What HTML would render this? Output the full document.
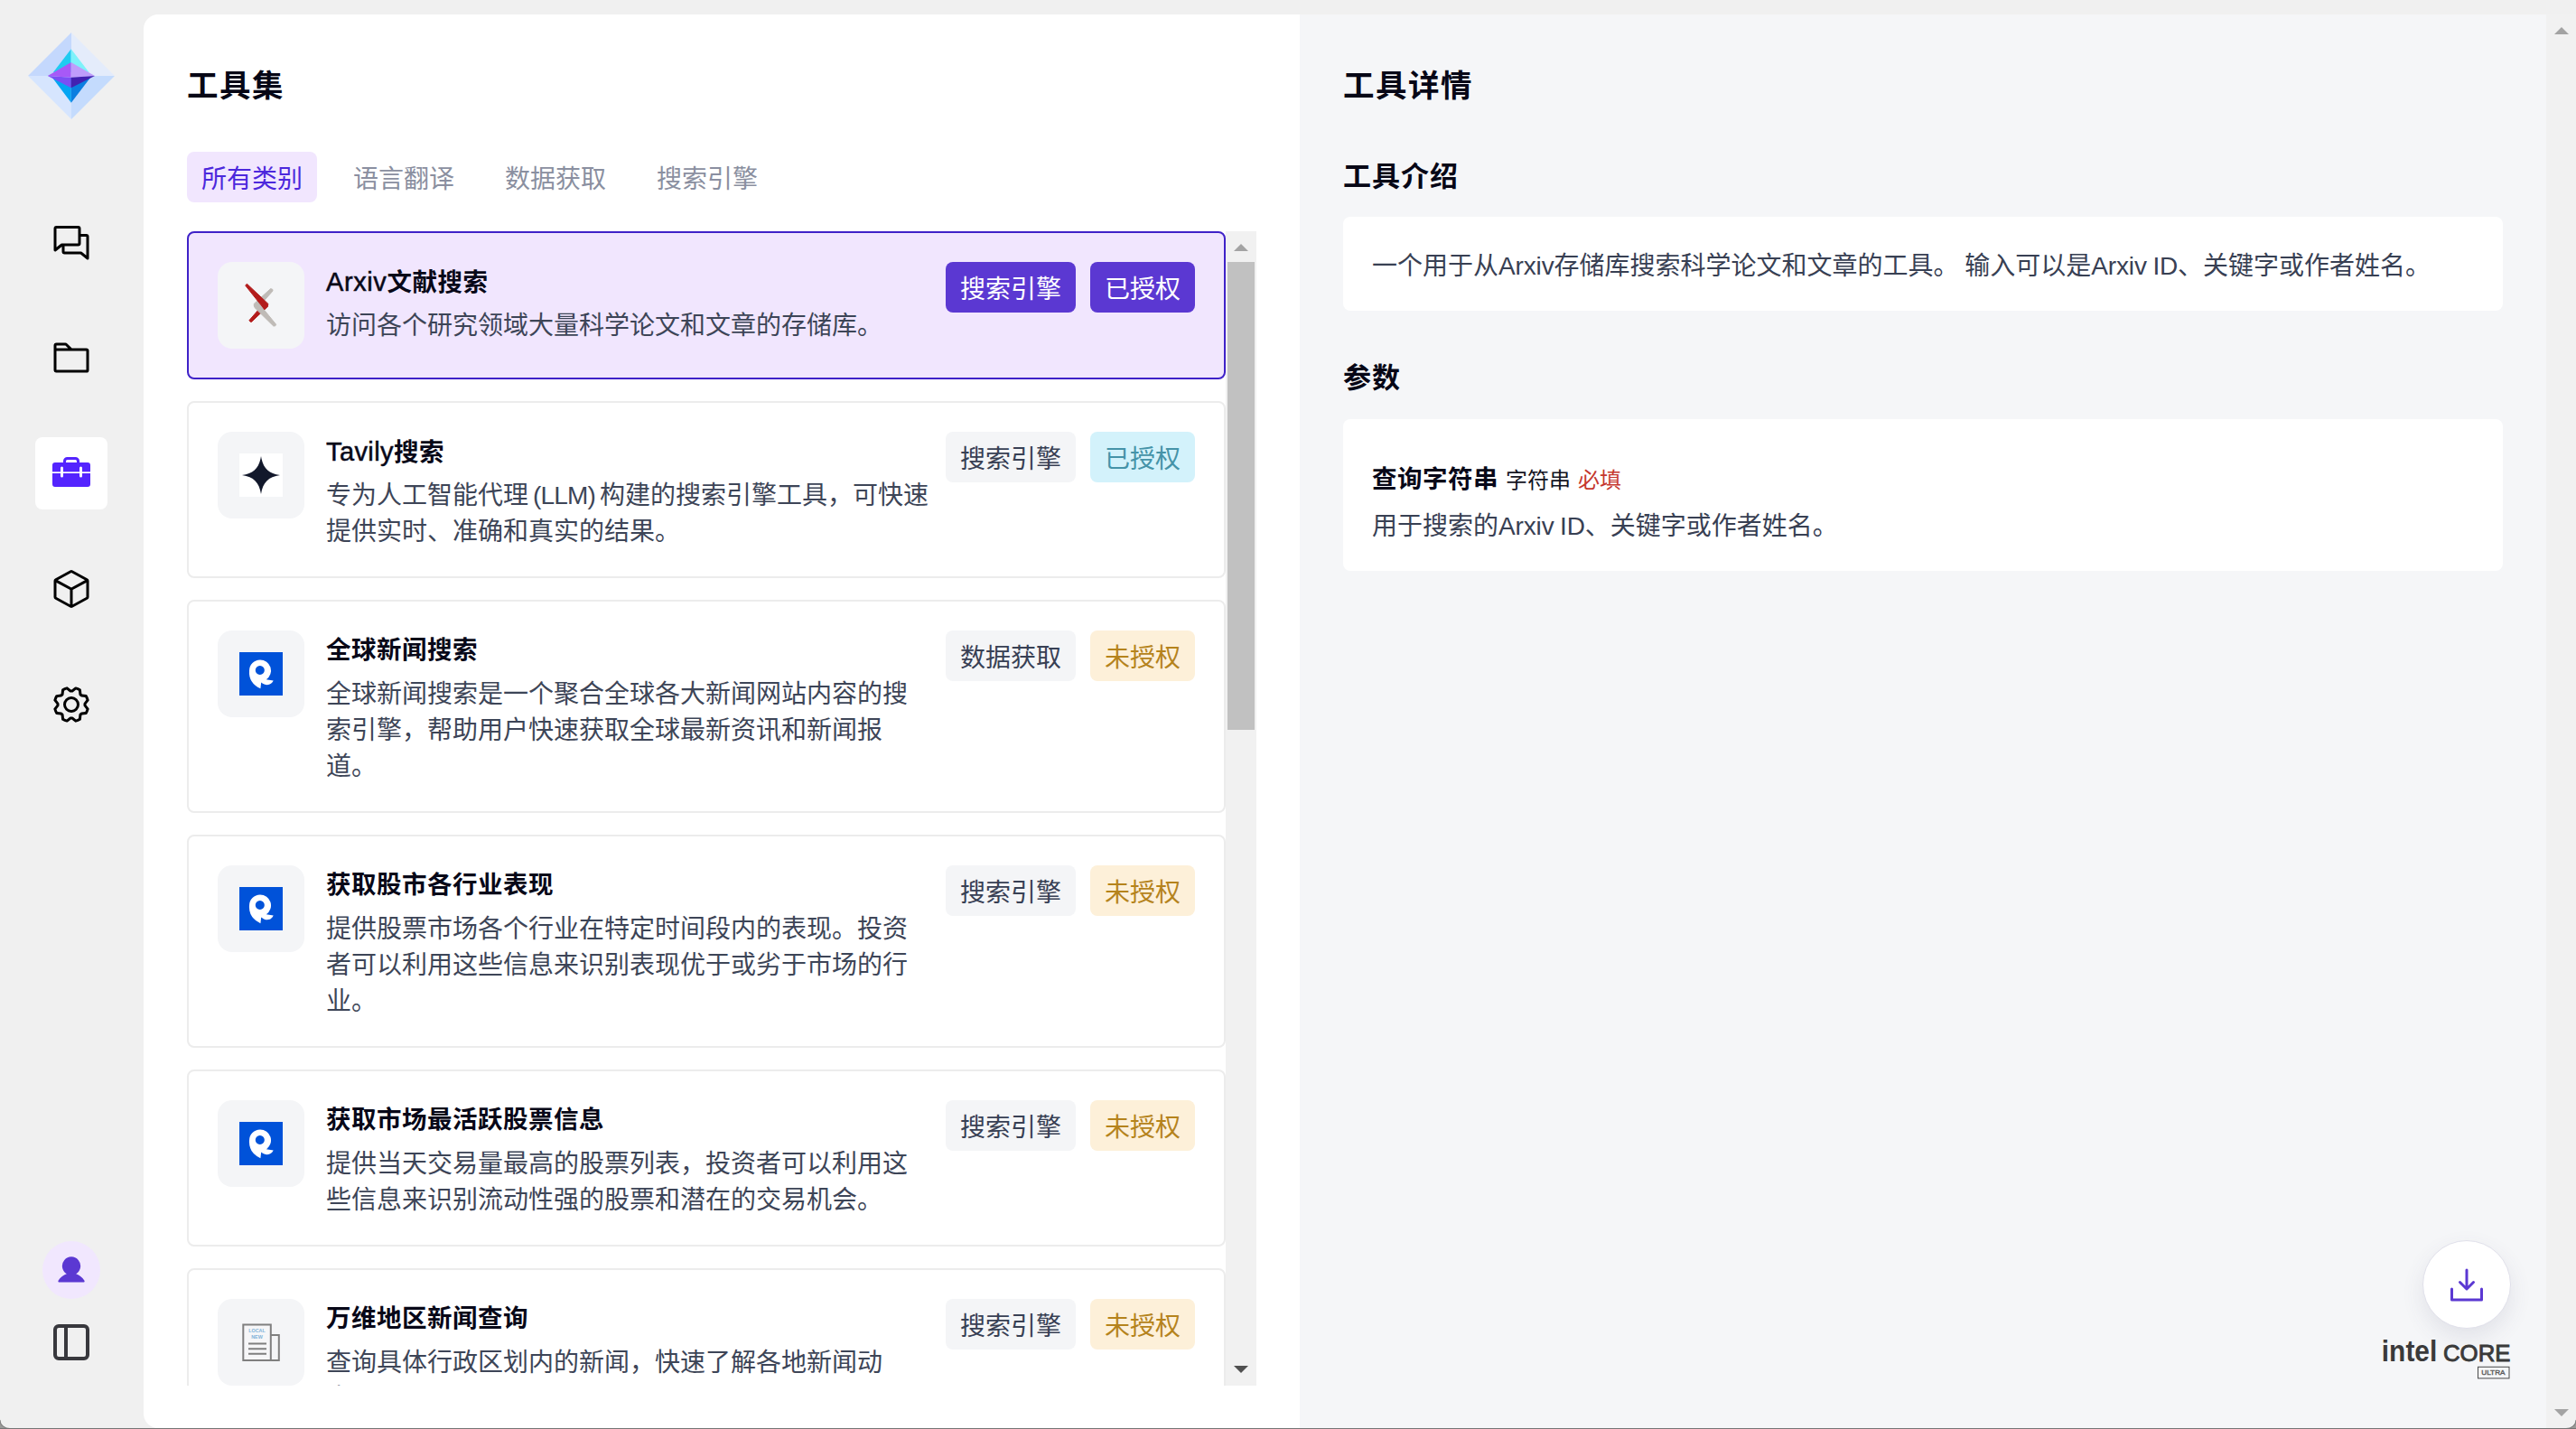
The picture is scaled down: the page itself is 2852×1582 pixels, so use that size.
<!DOCTYPE html>
<html lang="zh-CN">
<head>
<meta charset="utf-8">
<title>工具集</title>
<style>
*{box-sizing:border-box;margin:0;padding:0}
html,body{width:2852px;height:1582px;overflow:hidden}
body{position:relative;background:#f0f0f0;font-family:"Liberation Sans","Noto Sans CJK SC",sans-serif;color:#0b0b1c;-webkit-font-smoothing:antialiased}
.abs{position:absolute}
svg{display:block}
/* sidebar */
.nav{position:absolute;left:55px;width:48px;height:48px}
.navact{position:absolute;left:39px;top:484px;width:80px;height:80px;border-radius:8px;background:#fff}
/* panels */
#left{position:absolute;left:159px;top:16px;width:1280px;height:1565px;background:#fff;border-radius:16px 0 0 16px}
#right{position:absolute;left:1439px;top:16px;width:1380px;height:1565px;background:#f5f6f8}
#pscroll{position:absolute;left:2819px;top:16px;width:33px;height:1565px;background:#f1f1f1}
h1{position:absolute;font-size:34.5px;letter-spacing:1.5px;font-weight:700;line-height:56px;white-space:nowrap;color:#070716}
h2{position:absolute;font-size:31px;letter-spacing:1px;font-weight:700;line-height:48px;white-space:nowrap;color:#070716}
/* tabs */
.tab{position:absolute;top:168px;height:56px;line-height:62px;overflow:hidden;padding:0 16px;font-size:28px;border-radius:8px;color:#8a8fa0;white-space:nowrap}
.tab.on{background:#f1e6fe;color:#4c28dc}
/* list */
#list{position:absolute;left:207px;top:256px;width:1184px;height:1278px;overflow:hidden}
.card{position:relative;display:flex;width:1150px;padding:32px;border:2px solid #ececec;border-radius:8px;margin-bottom:24px;background:#fff}
.card.sel{background:#f1e6fe;border-color:#3f22c8}
.ico{flex:none;width:96px;height:96px;border-radius:16px;background:#f4f5f7;margin-right:24px;display:flex;align-items:center;justify-content:center}
.txt{flex:1;min-width:0}
.t{font-size:27.5px;letter-spacing:.5px;font-weight:700;line-height:44px;height:44px;margin-bottom:4px;white-space:nowrap;color:#080818}
.t i{font-style:normal;font-weight:400;font-size:29px;-webkit-text-stroke:0.5px #080818}
.d{position:relative;top:3px;font-size:28px;line-height:40px;color:#3d4557;white-space:nowrap}
.bd{flex:none;display:flex;margin-left:16px;height:56px}
.b{height:56px;line-height:62px;overflow:hidden;padding:0 16px;border-radius:8px;font-size:28px;margin-left:16px;white-space:nowrap;background:#f4f5f7;color:#384054}
.b:first-child{margin-left:0}
.b.p{background:#5b38d2;color:#fff}
.b.ok{background:#d3f2fb;color:#4593a8}
.b.no{background:#fdf0d9;color:#b5831c}
/* list scrollbar */
#sb{position:absolute;left:1357px;top:256px;width:34px;height:1278px;background:#f1f1f1}
#sb .th{position:absolute;left:2px;top:34px;width:30px;height:518px;background:#c1c1c1}
.arr{position:absolute;width:0;height:0;border-left:8px solid transparent;border-right:8px solid transparent}
.arr.up{border-bottom:8px solid #a3a3a3}
.arr.dn{border-top:8px solid #505050}
/* right */
.box{position:absolute;left:48px;width:1284px;background:#fff;border-radius:8px}
.l{letter-spacing:-.15px}
.p28{font-size:28px;word-spacing:-1px;line-height:40px;color:#384053;white-space:nowrap}
</style>
</head>
<body>

<!-- logo -->
<svg class="abs" style="left:31px;top:36px" width="96" height="96" viewBox="0 0 96 96">
<polygon points="48,0 48,48 0,48" fill="#c4d8fd"/>
<polygon points="48,0 96,48 48,48" fill="#e4ecfb"/>
<polygon points="0,48 48,48 48,96" fill="#d6e5fe"/>
<polygon points="96,48 48,96 48,48" fill="#c4dbfd"/>
<polygon points="47.7,18.2 28,44 47.7,44" fill="#1fcbf1"/>
<polygon points="47.7,18.2 47.7,44 67.5,44" fill="#7df2fa"/>
<polygon points="27,50 47.8,50 47.8,77.8" fill="#03a5f3"/>
<polygon points="47.8,50 69,50 47.8,77.8" fill="#0b7ee0"/>
<polygon points="21.8,48 47.7,33.1 47.7,49.8" fill="#a759f7"/>
<polygon points="47.7,33.1 74,48 47.7,49.8" fill="#bf9dfb"/>
<polygon points="21.8,48 47.7,49.8 47.7,61.2" fill="#7b4ff4"/>
<polygon points="74,48 47.7,61.2 47.7,49.8" fill="#4321b1"/>
</svg>

<!-- nav icons -->
<svg class="nav" style="top:244px" viewBox="0 0 256 256" fill="#000"><path d="M216,80H184V48a16,16,0,0,0-16-16H40A16,16,0,0,0,24,48V176a8,8,0,0,0,13,6.22L72,154V184a16,16,0,0,0,16,16h93.59L219,230.22a8,8,0,0,0,5,1.78,8,8,0,0,0,8-8V96A16,16,0,0,0,216,80ZM66.55,137.78,40,159.25V48H168v88H71.58A8,8,0,0,0,66.55,137.78ZM216,207.25l-26.55-21.47a8,8,0,0,0-5-1.78H88V152h80a16,16,0,0,0,16-16V96h32Z"/></svg>
<svg class="nav" style="top:372px" viewBox="0 0 256 256" fill="#000"><path d="M216,72H131.31L104,44.69A15.86,15.86,0,0,0,92.69,40H40A16,16,0,0,0,24,56V200.62A15.4,15.4,0,0,0,39.38,216H216.89A15.13,15.13,0,0,0,232,200.89V88A16,16,0,0,0,216,72ZM40,56H92.69l16,16H40ZM216,200H40V88H216Z"/></svg>
<div class="navact"></div>
<svg class="nav" style="top:500px" viewBox="0 0 256 256"><path fill="#5424fe" d="M224,64H176V56a24,24,0,0,0-24-24H104A24,24,0,0,0,80,56v8H32A16,16,0,0,0,16,80V192a16,16,0,0,0,16,16H224a16,16,0,0,0,16-16V80A16,16,0,0,0,224,64ZM96,56a8,8,0,0,1,8-8h48a8,8,0,0,1,8,8v8H96Z"/><rect x="16" y="119" width="224" height="9" fill="#fff"/><rect x="64" y="88" width="16" height="64" rx="8" fill="#fff"/><rect x="176" y="88" width="16" height="64" rx="8" fill="#fff"/></svg>
<svg class="nav" style="top:628px" viewBox="0 0 256 256" fill="#000"><path d="M223.68,66.15,135.68,18a15.88,15.88,0,0,0-15.36,0l-88,48.17a16,16,0,0,0-8.32,14v95.64a16,16,0,0,0,8.32,14l88,48.17a15.88,15.88,0,0,0,15.36,0l88-48.17a16,16,0,0,0,8.32-14V80.18A16,16,0,0,0,223.68,66.15ZM128,32l80.35,44L128,120,47.65,76ZM40,90l80,43.78v85.79L40,175.82Zm96,129.57V133.82L216,90v85.78Z"/></svg>
<svg class="nav" style="top:756px" viewBox="0 0 256 256" fill="#000"><path d="M128,80a48,48,0,1,0,48,48A48.05,48.05,0,0,0,128,80Zm0,80a32,32,0,1,1,32-32A32,32,0,0,1,128,160Zm88-29.84q.06-2.16,0-4.32l14.92-18.64a8,8,0,0,0,1.48-7.06,107.21,107.21,0,0,0-10.88-26.25,8,8,0,0,0-6-3.93l-23.72-2.64q-1.48-1.56-3-3L186,40.54a8,8,0,0,0-3.94-6,107.71,107.71,0,0,0-26.25-10.87,8,8,0,0,0-7.06,1.49L130.16,40Q128,40,125.84,40L107.2,25.11a8,8,0,0,0-7.06-1.48A107.6,107.6,0,0,0,73.89,34.51a8,8,0,0,0-3.93,6L67.32,64.27q-1.56,1.49-3,3L40.54,70a8,8,0,0,0-6,3.94,107.71,107.71,0,0,0-10.87,26.25,8,8,0,0,0,1.49,7.06L40,125.84Q40,128,40,130.16L25.11,148.8a8,8,0,0,0-1.48,7.06,107.21,107.21,0,0,0,10.88,26.25,8,8,0,0,0,6,3.93l23.72,2.64q1.49,1.56,3,3L70,215.46a8,8,0,0,0,3.94,6,107.71,107.71,0,0,0,26.25,10.87,8,8,0,0,0,7.06-1.49L125.84,216q2.16.06,4.32,0l18.64,14.92a8,8,0,0,0,7.06,1.48,107.21,107.21,0,0,0,26.25-10.88,8,8,0,0,0,3.93-6l2.64-23.72q1.56-1.48,3-3L215.46,186a8,8,0,0,0,6-3.94,107.71,107.71,0,0,0,10.87-26.25,8,8,0,0,0-1.49-7.06Zm-16.1-6.5a73.93,73.93,0,0,1,0,8.68,8,8,0,0,0,1.74,5.48l14.19,17.73a91.57,91.57,0,0,1-6.23,15L187,173.11a8,8,0,0,0-5.1,2.64,74.11,74.11,0,0,1-6.14,6.14,8,8,0,0,0-2.64,5.1l-2.51,22.58a91.32,91.32,0,0,1-15,6.23l-17.74-14.19a8,8,0,0,0-5-1.75h-.48a73.93,73.93,0,0,1-8.68,0,8,8,0,0,0-5.48,1.74L100.45,215.8a91.57,91.57,0,0,1-15-6.23L82.89,187a8,8,0,0,0-2.64-5.1,74.11,74.11,0,0,1-6.14-6.14,8,8,0,0,0-5.1-2.64L46.43,170.6a91.32,91.32,0,0,1-6.23-15l14.19-17.74a8,8,0,0,0,1.74-5.48,73.93,73.93,0,0,1,0-8.68,8,8,0,0,0-1.74-5.48L40.2,100.45a91.57,91.57,0,0,1,6.23-15L69,82.89a8,8,0,0,0,5.1-2.64,74.11,74.11,0,0,1,6.14-6.14A8,8,0,0,0,82.89,69L85.4,46.43a91.32,91.32,0,0,1,15-6.23l17.74,14.19a8,8,0,0,0,5.48,1.74,73.93,73.93,0,0,1,8.68,0,8,8,0,0,0,5.48-1.74L155.55,40.2a91.57,91.57,0,0,1,15,6.23L173.11,69a8,8,0,0,0,2.64,5.1,74.11,74.11,0,0,1,6.14,6.14,8,8,0,0,0,5.1,2.64l22.58,2.51a91.32,91.32,0,0,1,6.23,15l-14.19,17.74A8,8,0,0,0,199.87,123.66Z"/></svg>

<!-- avatar -->
<div class="abs" style="left:47px;top:1374px;width:64px;height:64px;border-radius:50%;background:#f1e7fe"></div>
<svg class="abs" style="left:61px;top:1388px" width="36" height="36" viewBox="0 0 256 256"><path fill="#5b38d2" d="M230.93,220a8,8,0,0,1-6.93,4H32a8,8,0,0,1-6.92-12c15.23-26.33,38.7-45.21,66.09-54.16a72,72,0,1,1,73.66,0c27.39,8.95,50.86,27.83,66.09,54.16A8,8,0,0,1,230.93,220Z"/></svg>
<svg class="abs" style="left:55px;top:1462px" width="48" height="48" viewBox="0 0 24 24" fill="none" stroke="#38383d" stroke-width="2" stroke-linecap="round" stroke-linejoin="round"><rect x="3" y="3" width="18" height="18" rx="2"/><path d="M9 3v18"/></svg>

<div id="left"></div>
<div id="right"></div>
<div id="pscroll"><div class="arr up" style="left:9px;top:14px"></div><div class="arr dn" style="left:9px;top:1544px;border-top-color:#a3a3a3"></div></div>

<h1 style="left:207px;top:67px">工具集</h1>
<div class="tab on" style="left:207px">所有类别</div>
<div class="tab" style="left:375px">语言翻译</div>
<div class="tab" style="left:543px">数据获取</div>
<div class="tab" style="left:711px">搜索引擎</div>

<div id="list">
<div class="card sel">
 <div class="ico"><svg width="96" height="96" viewBox="0 0 96 96">
  <g stroke-width="1" stroke-linejoin="round"><polygon points="55.4,49.2 37.4,66.4 36.0,66.1 35.0,64.6 47.7,50" fill="#b31b1b" stroke="#b31b1b"/>
  <polygon points="58.7,29.6 60.8,30.4 61.0,32.0 49.2,45.4 40.4,48.3 40.2,46.4" fill="#bfbbb7" stroke="#bfbbb7"/>
  <polygon points="40.2,48.1 41.0,50.6 61.8,71.0 63.8,70.8 64.6,69.2 50.8,52.3 46,46" fill="#bfbbb7" stroke="#bfbbb7"/>
  <polygon points="31.4,25.0 32.7,24.5 55.9,46.4 55.3,49.2 51.9,52.6 30.9,26.3" fill="#b31b1b" stroke="#b31b1b"/></g>
 </svg></div>
 <div class="txt"><div class="t"><i style="letter-spacing:.6px">Arxiv</i>文献搜索</div><div class="d">访问各个研究领域大量科学论文和文章的存储库。</div></div>
 <div class="bd"><span class="b p">搜索引擎</span><span class="b p">已授权</span></div>
</div>
<div class="card">
 <div class="ico"><svg width="48" height="48" viewBox="0 0 48 48"><rect width="48" height="48" fill="#fff"/><path d="M24 3C26 16 32 22 45 24C32 26 26 32 24 45C22 32 16 26 3 24C16 22 22 16 24 3Z" fill="#12182b"/></svg></div>
 <div class="txt"><div class="t"><i style="letter-spacing:.4px">Tavily</i>搜索</div><div class="d">专为人工智能代理<span style="letter-spacing:-.8px;word-spacing:-2px"> (LLM) </span>构建的搜索引擎工具，可快速<br>提供实时、准确和真实的结果。</div></div>
 <div class="bd"><span class="b">搜索引擎</span><span class="b ok">已授权</span></div>
</div>
<div class="card">
 <div class="ico"><svg width="48" height="48" viewBox="0 0 48 48"><rect width="48" height="48" fill="#0052d9"/><path fill="#fff" fill-rule="evenodd" d="M23 8.4A12 12 0 0 1 29.8 30.3L37.7 31.6C36 36 30 38.5 24.2 33.6L23.4 40.2Q10 34 11 20.4A12 12 0 0 1 23 8.4ZM22.8 15a5 5 0 1 0 .01 0Z"/></svg></div>
 <div class="txt"><div class="t">全球新闻搜索</div><div class="d">全球新闻搜索是一个聚合全球各大新闻网站内容的搜<br>索引擎，帮助用户快速获取全球最新资讯和新闻报<br>道。</div></div>
 <div class="bd"><span class="b">数据获取</span><span class="b no">未授权</span></div>
</div>
<div class="card">
 <div class="ico"><svg width="48" height="48" viewBox="0 0 48 48"><rect width="48" height="48" fill="#0052d9"/><path fill="#fff" fill-rule="evenodd" d="M23 8.4A12 12 0 0 1 29.8 30.3L37.7 31.6C36 36 30 38.5 24.2 33.6L23.4 40.2Q10 34 11 20.4A12 12 0 0 1 23 8.4ZM22.8 15a5 5 0 1 0 .01 0Z"/></svg></div>
 <div class="txt"><div class="t">获取股市各行业表现</div><div class="d">提供股票市场各个行业在特定时间段内的表现。投资<br>者可以利用这些信息来识别表现优于或劣于市场的行<br>业。</div></div>
 <div class="bd"><span class="b">搜索引擎</span><span class="b no">未授权</span></div>
</div>
<div class="card">
 <div class="ico"><svg width="48" height="48" viewBox="0 0 48 48"><rect width="48" height="48" fill="#0052d9"/><path fill="#fff" fill-rule="evenodd" d="M23 8.4A12 12 0 0 1 29.8 30.3L37.7 31.6C36 36 30 38.5 24.2 33.6L23.4 40.2Q10 34 11 20.4A12 12 0 0 1 23 8.4ZM22.8 15a5 5 0 1 0 .01 0Z"/></svg></div>
 <div class="txt"><div class="t">获取市场最活跃股票信息</div><div class="d">提供当天交易量最高的股票列表，投资者可以利用这<br>些信息来识别流动性强的股票和潜在的交易机会。</div></div>
 <div class="bd"><span class="b">搜索引擎</span><span class="b no">未授权</span></div>
</div>
<div class="card">
 <div class="ico"><svg width="48" height="48" viewBox="0 0 48 48" fill="none" stroke="#7f7f7f" stroke-width="2"><rect x="4.3" y="4.5" width="30.5" height="39.5" fill="#f6f6f8"/><path d="M35 16h8.8v28H5"/><path d="M10 25.6h20M10 31.2h20M10 36.8h20"/><text x="19.5" y="12.6" font-size="5.4" font-weight="700" text-anchor="middle" fill="#7fb2d8" stroke="none" font-family="Liberation Sans,sans-serif">LOCAL</text><text x="19.5" y="19.6" font-size="5.4" font-weight="700" text-anchor="middle" fill="#7fb2d8" stroke="none" font-family="Liberation Sans,sans-serif">NEW</text></svg></div>
 <div class="txt"><div class="t">万维地区新闻查询</div><div class="d">查询具体行政区划内的新闻，快速了解各地新闻动<br>态。</div></div>
 <div class="bd"><span class="b">搜索引擎</span><span class="b no">未授权</span></div>
</div>

</div>
<div id="sb"><div class="arr up" style="left:9px;top:14px"></div><div class="th"></div><div class="arr dn" style="left:9px;top:1256px"></div></div>

<h1 style="left:1487px;top:67px">工具详情</h1>
<h2 style="left:1487px;top:172px">工具介绍</h2>
<div class="box" style="left:1487px;top:240px;height:104px"><div class="p28 abs" style="left:32px;top:35px">一个用于从<span class="l">Arxiv</span>存储库搜索科学论文和文章的工具。 输入可以是<span class="l">Arxiv ID</span>、关键字或作者姓名。</div></div>
<h2 style="left:1487px;top:395px">参数</h2>
<div class="box" style="left:1487px;top:464px;height:168px">
 <div class="abs" style="left:32px;top:45px;white-space:nowrap;line-height:44px;font-size:24px;color:#14141f"><b style="font-size:27.5px;letter-spacing:.5px;color:#080818">查询字符串</b><span style="margin-left:8px">字符串</span><span style="margin-left:8px;color:#c5372e">必填</span></div>
 <div class="p28 abs" style="left:32px;top:99px">用于搜索的<span class="l">Arxiv ID</span>、关键字或作者姓名。</div>
</div>

<!-- download fab -->
<div class="abs" style="left:2682px;top:1373px;width:98px;height:98px;border-radius:50%;background:#fff;border:1px solid #e0e0ea;box-shadow:0 10px 24px rgba(70,70,110,.11)"></div>
<svg class="abs" style="left:2707px;top:1400px" width="48" height="48" viewBox="0 0 256 256"><path fill="#5b38d2" d="M224,144v64a8,8,0,0,1-8,8H40a8,8,0,0,1-8-8V144a8,8,0,0,1,16,0v56H208V144a8,8,0,0,1,16,0Zm-101.66,5.66a8,8,0,0,0,11.32,0l40-40a8,8,0,0,0-11.32-11.32L136,124.69V32a8,8,0,0,0-16,0v92.69L93.66,98.34a8,8,0,0,0-11.32,11.32Z"/></svg>
<!-- intel core ultra -->
<svg class="abs" style="left:2630px;top:1476px" width="160" height="56" viewBox="0 0 160 56" font-family="Liberation Sans,sans-serif" fill="#3a3a3a">
<text x="6.8" y="30.8" font-size="33.5" font-weight="700" textLength="61.5" lengthAdjust="spacingAndGlyphs">intel</text>
<text x="75" y="30.8" font-size="25.5" textLength="74.5" lengthAdjust="spacingAndGlyphs" stroke="#3a3a3a" stroke-width=".9">CORE</text>
<rect x="113.5" y="37.3" width="34.5" height="12.6" fill="none" stroke="#4a4a4a" stroke-width="1"/>
<text x="117.2" y="46.4" font-size="7.6" textLength="26.4" lengthAdjust="spacingAndGlyphs" fill="#5a5a5a" stroke="#5a5a5a" stroke-width=".35">ULTRA</text>
</svg>


<!-- window bottom edge -->
<svg class="abs" style="left:0;top:1566px" width="16" height="16" viewBox="0 0 16 16"><path d="M-1 5.5L0 6.5A11 9 0 0 0 11 15.5L16 16H-1Z" fill="#9b9b99" stroke="#828282" stroke-width="1.2"/></svg>
<svg class="abs" style="left:2836px;top:1566px" width="16" height="16" viewBox="0 0 16 16"><path d="M17 5.5L16 6.5A11 9 0 0 1 5 15.5L0 16H17Z" fill="#9b9b99" stroke="#828282" stroke-width="1.2"/></svg>
<div class="abs" style="left:0;top:1581px;width:2852px;height:1px;background:#757575"></div>
</body>
</html>
